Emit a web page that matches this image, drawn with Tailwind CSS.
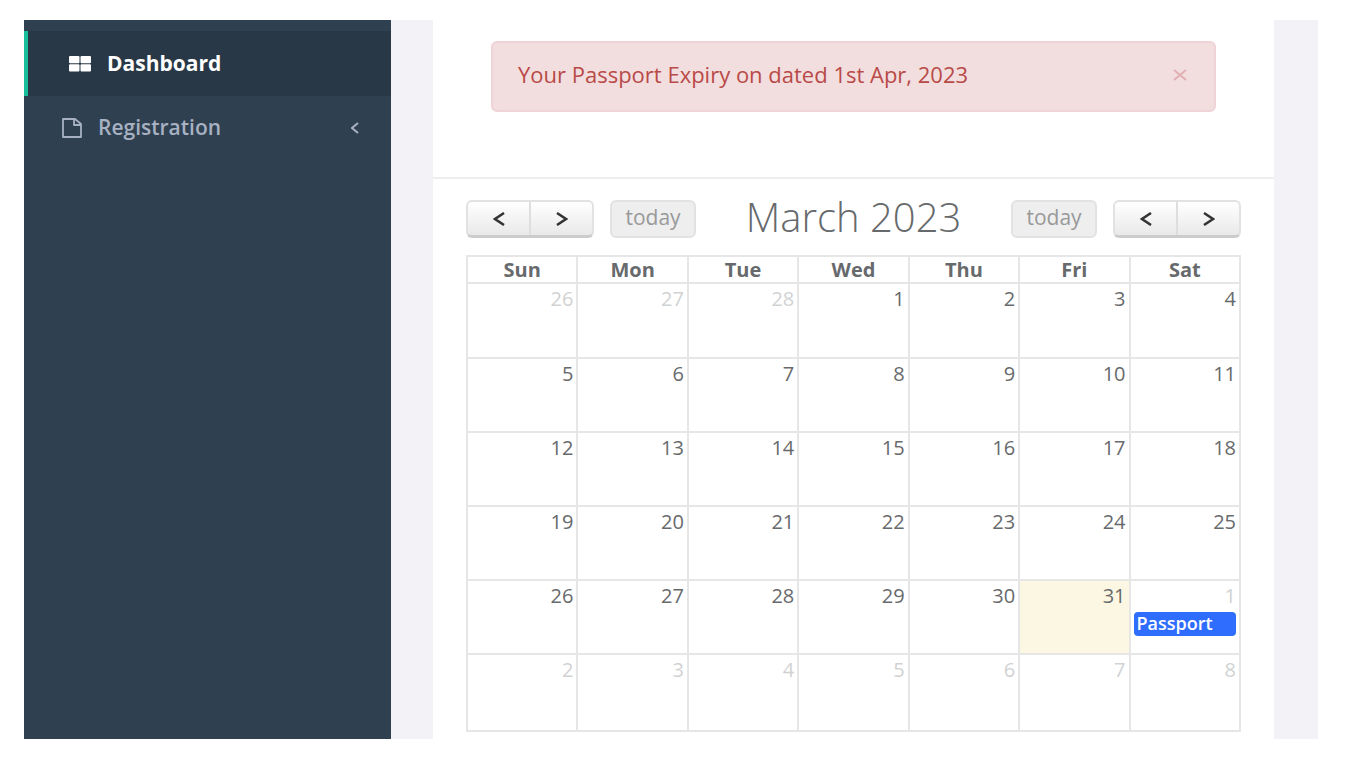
<!DOCTYPE html>
<html lang="en">
<head>
    <meta charset="UTF-8">
    <meta name="viewport" content="width=device-width, initial-scale=1.0">
    <title>Dashboard</title>
    <!-- Tailwind CSS CDN -->
    <script src="https://cdn.jsdelivr.net/npm/@tailwindcss/browser@4"></script>
</head>
<body class="bg-white font-['Open_Sans',sans-serif] text-xl text-[#676a6c]">

    <div class="flex min-h-screen pt-5 pb-5 pl-6 pr-12">

        <!-- Sidebar -->
        <nav class="w-[367px] shrink-0 bg-[#2f4050] pt-[11px] font-bold text-[21px]">
            <a href="#" class="flex h-[65px] items-center border-l-4 border-[#19be9b] bg-[#293846] pl-[41px] text-white">
                <svg class="mr-4 h-4 w-[22px]" viewBox="0 0 22 16" fill="currentColor" aria-hidden="true">
                    <rect x="0" y="0" width="10.5" height="7.3" rx="1"/>
                    <rect x="11.5" y="0" width="10.5" height="7.3" rx="1"/>
                    <rect x="0" y="8.3" width="10.5" height="7.3" rx="1"/>
                    <rect x="11.5" y="8.3" width="10.5" height="7.3" rx="1"/>
                </svg>
                Dashboard
            </a>
            <a href="#" class="flex h-16 items-center pl-[38px] pr-8 font-semibold text-[#a7b1c2]">
                <svg class="mr-4 h-5 w-5" viewBox="0 0 20 20" fill="none" stroke="currentColor" stroke-width="1.8" stroke-linejoin="round" aria-hidden="true">
                    <path d="M1 1h12l6 5v13H1z"/>
                    <path d="M12 1v6h7"/>
                </svg>
                Registration
                <svg class="ml-auto h-3 w-2" viewBox="0 0 8 12" fill="none" stroke="currentColor" stroke-width="2" aria-hidden="true">
                    <path d="M7 1L1 6l6 5"/>
                </svg>
            </a>
        </nav>

        <!-- Content -->
        <main class="flex-1 bg-[#f3f3f7] pl-[42px] pr-11">
            <div class="h-full bg-white">
                <div class="border-b-2 border-[#eeeeee] px-[58px] pt-[21px] pb-[65px]">
                    <div role="alert" class="flex h-[71px] items-center justify-between rounded-md border-2 border-[#efd3d7] bg-[#f2dede] pl-[25px] pr-[27px] pb-1 text-[#b94a48]">
                        <span class="text-[22px]">Your Passport Expiry on dated 1st Apr, 2023</span>
                        <button type="button" aria-label="Close" class="text-[#e0b0b2]">
                            <svg class="h-3 w-[14px]" viewBox="0 0 14 12" fill="none" stroke="currentColor" stroke-width="2" aria-hidden="true">
                                <path d="M1 1l12 10M13 1L1 11"/>
                            </svg>
                        </button>
                    </div>
                </div>

                <div class="px-[33px] pt-[21px]">
                    <!-- Calendar toolbar -->
                    <div class="flex h-[38px] items-center justify-between">
                        <div class="flex gap-4">
                            <div class="flex h-[38px] w-32 rounded-md border-2 border-b-[3px] border-[#e2e2e2] border-b-[#cccccc] bg-linear-to-b from-white to-[#e9e9e9] text-[#333333]">
                                <button type="button" aria-label="Previous month" class="flex flex-1 items-center justify-center border-r-2 border-[#dedede]">
                                    <svg class="h-[14px] w-3" viewBox="0 0 12 14" fill="none" stroke="currentColor" stroke-width="2.5" aria-hidden="true"><path d="M11 1L2 7l9 6"/></svg>
                                </button>
                                <button type="button" aria-label="Next month" class="flex flex-1 items-center justify-center">
                                    <svg class="h-[14px] w-3" viewBox="0 0 12 14" fill="none" stroke="currentColor" stroke-width="2.5" aria-hidden="true"><path d="M1 1l9 6-9 6"/></svg>
                                </button>
                            </div>
                            <button type="button" disabled class="h-[38px] w-[86px] rounded-md border-2 border-[#e2e2e2] bg-[#eeeeee] pb-1 text-[21px] leading-7 text-[#999999]">today</button>
                        </div>
                        <h2 class="pb-1 text-[40px] leading-none font-light">March 2023</h2>
                        <div class="flex gap-4">
                            <button type="button" disabled class="h-[38px] w-[86px] rounded-md border-2 border-[#e2e2e2] bg-[#eeeeee] pb-1 text-[21px] leading-7 text-[#999999]">today</button>
                            <div class="flex h-[38px] w-32 rounded-md border-2 border-b-[3px] border-[#e2e2e2] border-b-[#cccccc] bg-linear-to-b from-white to-[#e9e9e9] text-[#333333]">
                                <button type="button" aria-label="Previous month" class="flex flex-1 items-center justify-center border-r-2 border-[#dedede]">
                                    <svg class="h-[14px] w-3" viewBox="0 0 12 14" fill="none" stroke="currentColor" stroke-width="2.5" aria-hidden="true"><path d="M11 1L2 7l9 6"/></svg>
                                </button>
                                <button type="button" aria-label="Next month" class="flex flex-1 items-center justify-center">
                                    <svg class="h-[14px] w-3" viewBox="0 0 12 14" fill="none" stroke="currentColor" stroke-width="2.5" aria-hidden="true"><path d="M1 1l9 6-9 6"/></svg>
                                </button>
                            </div>
                        </div>
                    </div>

                    <!-- Month grid -->
                    <table class="mt-[17px] w-full table-fixed border-collapse">
                        <thead>
                            <tr class="h-[27px] leading-6">
                                <th class="border-2 border-[#e6e6e6] p-0">Sun</th>
                                <th class="border-2 border-[#e6e6e6] p-0">Mon</th>
                                <th class="border-2 border-[#e6e6e6] p-0">Tue</th>
                                <th class="border-2 border-[#e6e6e6] p-0">Wed</th>
                                <th class="border-2 border-[#e6e6e6] p-0">Thu</th>
                                <th class="border-2 border-[#e6e6e6] p-0">Fri</th>
                                <th class="border-2 border-[#e6e6e6] p-0">Sat</th>
                            </tr>
                        </thead>
                        <tbody id="days"></tbody>
                    </table>
                </div>
            </div>
        </main>
    </div>

    <script>
        // Feb 26 is the first visible day, the grid always shows six weeks
        const start = new Date(2023, 1, 26);
        const events = { "3-1": "Passport" };
        const body = document.getElementById("days");

        for (let week = 0; week < 6; week++) {
            const row = document.createElement("tr");
            row.className = "h-[74px] first:h-[75px] last:h-[77px]";
            for (let day = 0; day < 7; day++) {
                const date = new Date(start.getFullYear(), start.getMonth(), start.getDate() + week * 7 + day);
                const cell = document.createElement("td");
                cell.className = "border-2 border-[#e6e6e6] px-[3px] pt-[3px] align-top";
                if (date.getMonth() === 2 && date.getDate() === 31) {
                    cell.classList.add("bg-[#fbf7e3]");
                }

                const number = document.createElement("div");
                number.className = "text-right leading-6";
                if (date.getMonth() !== 2) {
                    number.classList.add("opacity-30");
                }
                number.textContent = date.getDate();
                cell.appendChild(number);

                const title = events[date.getMonth() + "-" + date.getDate()];
                if (title) {
                    const event = document.createElement("a");
                    event.href = "#";
                    event.className = "mt-1 block h-6 rounded-sm bg-[#2f6dff] px-[3px] text-lg leading-[22px] font-semibold text-white";
                    event.textContent = title;
                    cell.appendChild(event);
                }
                row.appendChild(cell);
            }
            body.appendChild(row);
        }
    </script>

</body>
</html>
